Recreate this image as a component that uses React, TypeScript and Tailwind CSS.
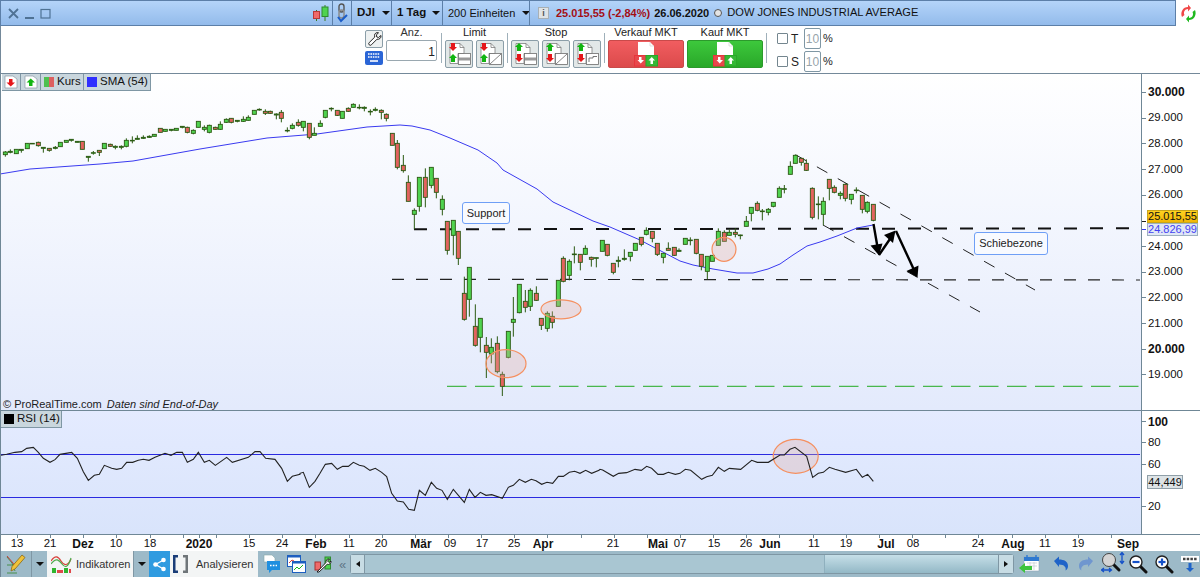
import React from "react"

const GREEN = "#4fd34f"
const RED = "#e2635e"
const WICK = "#2b5a12"

// [x, wickTop, bodyTop, bodyBottom, wickBottom, colour] read at 3x from the chart, per region
type C = [number, number, number, number, number, "G" | "R"]

const part1: C[] = [
  [16,183,186,194,200,"G"],[31,178,184,187,190,"G"],[49,178,178,191,192,"G"],[64,178,178,181,188,"G"],[82,160,160,176,176,"G"],[97,160,160,161,161,"G"],
  [115,155,157,167,170,"R"],[130,172,172,175,188,"G"],[148,175,175,181,185,"R"],[166,168,172,175,178,"G"],[181,157,157,170,170,"G"],[199,151,151,157,157,"G"],
  [214,148,148,151,155,"G"],[232,154,154,157,157,"G"],[247,154,154,178,178,"R"],[265,199,199,202,215,"G"],[280,183,188,189,194,"G"],[298,181,181,187,198,"R"],
  [313,160,160,176,176,"G"],[331,161,163,169,170,"R"],[346,166,169,172,178,"G"],[364,166,169,172,178,"G"],[379,145,151,169,172,"G"],[397,139,151,152,160,"G"],
  [412,136,145,148,148,"G"],[430,136,142,145,147,"G"],[448,136,139,142,144,"G"],[463,133,133,139,139,"G"],[481,115,115,127,127,"R"],[496,118,118,124,125,"G"],
  [514,118,118,121,124,"G"],[529,115,115,121,121,"G"],[547,109,109,112,115,"G"],[562,110,112,127,130,"R"],[580,118,121,130,133,"G"],[595,94,94,112,112,"G"],
  [613,106,112,118,124,"G"],[628,104,106,127,130,"G"],[646,110,112,118,119,"R"],[661,94,103,118,120,"G"],[679,85,88,97,99,"G"],[694,85,85,97,100,"R"],
  [712,91,91,94,97,"G"],[730,79,88,94,96,"G"],[745,76,82,91,92,"G"],[763,61,61,73,73,"G"],[778,55,58,60,62,"G"],[796,58,64,70,75,"R"],[811,62,64,70,72,"R"],
  [829,70,72,75,88,"G"],[844,60,67,85,97,"R"],[862,112,121,122,127,"G"],[877,100,106,115,118,"G"],[895,88,97,106,110,"R"],[910,94,94,112,124,"G"],
  [928,100,100,142,148,"R"],[943,112,130,136,136,"G"],[961,91,100,109,110,"G"],[976,61,61,82,85,"G"],[994,52,55,56,64,"G"],[1012,61,61,76,78,"R"],[1027,64,64,85,85,"G"],
  [1045,52,55,64,66,"R"],[1060,40,43,52,52,"G"],[1078,43,52,53,58,"G"],[1093,49,52,55,64,"G"],[1111,58,64,65,76,"G"],[1126,52,58,61,64,"G"],[1144,58,61,67,88,"R"],
  [1159,70,73,85,94,"R"],[1177,130,130,166,166,"R"],[1192,150,160,232,238,"R"],
]
const part2: C[] = [
  [70,15,46,62,68,"R"],[85,76,97,154,154,"R"],[103,175,181,193,238,"G"],[118,82,82,169,185,"G"],[136,55,82,142,172,"R"],[154,52,52,106,115,"G"],[169,85,85,127,145,"R"],
  [187,136,148,178,196,"G"],[202,214,214,301,314,"R"],[220,211,211,256,316,"G"],[235,244,244,325,345,"R"],[253,380,430,508,512,"R"],[268,352,352,448,500,"G"],
  [286,463,529,586,590,"R"],[301,505,505,562,607,"G"],[319,561,586,607,684,"R"],[334,565,592,612,640,"G"],[352,559,580,665,670,"R"],[367,665,673,709,738,"R"],
  [385,544,544,622,625,"G"],[400,441,508,517,560,"G"],[418,403,403,488,490,"G"],[436,420,454,472,487,"R"],[451,415,421,469,483,"G"],[469,409,430,451,453,"R"],
  [484,505,505,526,540,"R"],[502,484,490,535,545,"G"],[517,484,499,517,535,"R"],[535,391,391,469,469,"G"],[550,319,325,394,397,"R"],[568,328,334,376,391,"G"],
  [583,289,312,314,340,"G"],[601,313,313,337,361,"R"],[616,286,295,313,315,"G"],[634,320,322,328,350,"R"],[649,323,323,325,352,"G"],[667,271,271,304,304,"G"],
  [682,283,283,316,319,"R"],[700,340,340,367,373,"R"],[715,319,331,334,352,"G"],[733,298,325,328,332,"G"],[751,307,307,319,334,"G"],[766,280,280,301,301,"G"],
  [784,262,262,283,289,"R"],[799,232,241,253,256,"G"],[817,244,244,265,277,"R"],[832,280,280,313,318,"R"],[850,310,310,322,340,"G"],[865,277,295,301,301,"R"],[883,292,292,316,318,"R"],
]
const part3: C[] = [
  [-3,325,331,334,336,"G"],[16,295,295,313,313,"G"],[31,292,300,302,316,"G"],[49,298,298,340,343,"R"],[64,343,343,379,391,"R"],[82,349,349,394,418,"G"],[97,346,346,364,364,"G"],
  [115,265,274,316,316,"G"],[133,271,277,304,304,"R"],[148,268,277,286,286,"G"],[166,265,277,283,292,"R"],[181,284,285,287,298,"G"],[199,228,244,259,259,"G"],
  [214,202,202,220,244,"G"],[232,184,190,211,214,"R"],[247,207,213,215,241,"G"],[265,204,208,217,226,"G"],[280,187,187,199,202,"G"],[298,139,145,172,172,"G"],
  [313,135,146,148,160,"G"],[331,64,79,103,103,"G"],[346,43,46,70,70,"G"],[364,55,55,67,77,"R"],[379,58,70,91,93,"R"],[397,142,145,232,238,"R"],[415,169,192,194,238,"G"],
  [430,172,184,223,256,"G"],[448,118,118,145,181,"R"],[463,136,142,157,160,"R"],[481,154,160,166,178,"G"],[496,130,133,175,184,"R"],[514,163,163,178,193,"G"],
  [529,142,150,152,160,"G"],[547,166,166,208,220,"R"],[562,184,187,214,220,"G"],[580,193,193,241,244,"R"],
]

const toPage = (c: C, ox: number, oy: number) => ({
  x: ox + c[0] / 3, wt: oy + c[1] / 3, t: oy + c[2] / 3, b: oy + c[3] / 3, wb: oy + c[4] / 3, col: c[5],
})
const candles = [
  ...part1.map((c) => toPage(c, 0, 90)),
  ...part2.map((c) => toPage(c, 380, 150)),
  ...part3.map((c) => toPage(c, 680, 140)),
]

const sma = "0,174 30,169 100,164 133,161 200,149 267,138 317,134 367,127 400,125 412,126 430,130 450,138 478,150 497,163 503,170 537,189 553,202 593,221 610,227 640,240 680,261 693,265 713,269 737,273 753,273 768,269 780,264 793,255 807,246 820,242 837,236 857,228 873,225"

const rsiA = [[0,181],[20,178],[45,172],[65,170],[80,160],[100,157],[115,172],[130,190],[150,202],[165,194],[180,178],[215,172],[232,190],[250,230],[265,256],[283,241],[298,238],[313,211],[335,220],[350,223],[365,220],[380,202],[398,202],[415,196],[430,193],[447,196],[465,187],[495,175],[513,181],[530,172],[547,172],[562,202],[580,193],[595,172],[613,202],[628,196],[646,211],[680,187],[697,202],[745,187],[765,170],[780,170],[797,190],[825,193],[845,220],[862,259],[877,244],[900,238]]
const rsiB = [[0,190],[10,187],[28,232],[45,214],[60,190],[76,163],[95,160],[112,178],[128,169],[145,169],[160,157],[178,166],[192,169],[210,181],[226,175],[245,187],[260,200],[275,250],[292,273],[310,276],[326,298],[343,301],[358,241],[376,256],[394,217],[410,235],[426,241],[442,268],[460,238],[493,277],[508,238],[525,262],[541,247],[558,256],[575,254],[607,265],[625,232],[640,226],[658,208],[676,217],[694,208],[708,212],[725,223],[741,217],[758,220],[775,199],[790,199],[808,187],[824,184],[840,190],[857,181],[875,190],[897,181]]
const rsiC = [[0,178],[8,180],[40,199],[56,190],[80,188],[105,178],[124,181],[140,169],[155,175],[174,193],[190,193],[205,187],[226,193],[240,190],[256,178],[272,181],[305,208],[320,200],[337,196],[355,172],[373,184],[388,175],[422,178],[455,151],[472,157],[505,157],[540,135],[553,135],[570,118],[585,112],[620,139],[638,202],[655,190],[670,187],[688,172],[705,178],[737,187],[769,178],[787,202],[803,193],[820,214]]
const rsi = [
  ...rsiA.map(([x, y]) => `${x / 3},${y / 3 + 395}`),
  ...rsiB.map(([x, y]) => `${300 + x / 3},${y / 3 + 410}`),
  ...rsiC.map(([x, y]) => `${600 + x / 3},${y / 3 + 410}`),
].join(" ")

const priceRows = ["30.000", "29.000", "28.000", "27.000", "26.000", "", "24.000", "23.000", "22.000", "21.000", "20.000", "19.000"]
const xTicks = [...Array.from({ length: 34 }, (_, k) => 16 + 33.15 * k), 198]
const xLabels: [string, number, boolean][] = [
  ["13",16,false],["21",49,false],["Dez",82,true],["10",115,false],["18",149,false],["2020",198,true],["15",248,false],["24",281,false],["Feb",315,true],["11",348,false],["20",380,false],
  ["Mär",420,true],["09",449,false],["17",481,false],["25",513,false],["Apr",542,true],["21",612,false],["Mai",657,true],["07",679,false],["15",713,false],["26",745,false],["Jun",769,true],
  ["11",813,false],["19",845,false],["Jul",885,true],["08",912,false],["24",977,false],["Aug",1012,true],["11",1044,false],["19",1077,false],["Sep",1127,true],
]

function Caret() {
  return <span className="inline-block border-x-[4px] border-t-[4px] border-x-transparent border-t-[#111]" />
}

function Arrow({ x, y, up, color }: { x: number; y: number; up?: boolean; color: string }) {
  const d = up ? `M${x} ${y}l4 4h-2v4h-4v-4h-2z` : `M${x - 2} ${y}h4v4h2l-4 4l-4 -4h2z`
  return <path d={d} fill={color} />
}

// one of the five little order buttons: page corner, two arrows and a shape
function OrderButton({ first, shape }: { first: "up" | "down"; shape: "limit" | "stop" | "trail" }) {
  return (
    <div className="w-[28px] h-[28px] rounded-[2px] border border-[#8b9ea8] bg-[#e2e8e8] flex items-center justify-center">
      <svg width="26" height="26" viewBox="0 0 26 26">
        <path d="M4 2.500h10l4 4v6h-6v10H4z" fill="#fff" stroke="#6d6d6d" strokeWidth="0.7" />
        <path d="M14 2.500v4h4" fill="none" stroke="#6d6d6d" strokeWidth="0.7" />
        {first === "down" ? (
          <>
            <Arrow x={7} y={2} color="#e5161a" />
            <Arrow x={7} y={13} up color="#12b512" />
          </>
        ) : (
          <>
            <Arrow x={7} y={2} up color="#12b512" />
            <Arrow x={7} y={13} color="#e5161a" />
          </>
        )}
        <rect x="12.500" y="12.500" width="12" height="11" fill="#fff" stroke="#6d6d6d" strokeWidth="0.8" />
        {shape === "limit" && <rect x="13" y="16.500" width="11" height="3" fill="#9a9a9a" />}
        {shape === "stop" && <path d="M13 23l11 -10" stroke="#777" strokeWidth="0.9" />}
        {shape === "trail" && <path d="M15 21v-4h4v-1.500h4" stroke="#777" fill="none" strokeWidth="1" />}
      </svg>
    </div>
  )
}

function MarketIcon() {
  return (
    <svg width="24" height="26" viewBox="0 0 24 26">
      <path d="M4 1h12l4 4v10H4z" fill="#fff" />
      <path d="M16 1v4h4" fill="none" stroke="#ccc" strokeWidth="0.6" />
      <rect x="0.500" y="14.500" width="11.500" height="10.500" fill="#e8484c" stroke="#e8343c" />
      <rect x="12" y="14.500" width="11.500" height="10.500" fill="#35b835" stroke="#2aa82a" />
      <path d="M5 16h2.500v3H10l-3.250 3.500L3.500 19H5z" fill="#fff" />
      <path d="M17.750 16l3.250 3.500h-2V23h-2.500v-3.500h-2z" fill="#fff" />
    </svg>
  )
}

function Check({ label }: { label: string }) {
  return (
    <div className="flex items-center h-[21px]">
      <span className="w-[11px] h-[11px] rounded-[1px] border border-[#74868f] bg-white" />
      <span className="w-[16px] pl-[3px] text-[12px] text-[#222]">{label}</span>
      <span className="w-[17px] h-[21px] rounded-[2px] border border-[#7f97a4] text-[#98a4ab] text-[12px] flex items-center justify-center">10</span>
      <span className="ml-[2px] text-[11px] text-[#222]">%</span>
    </div>
  )
}

function Magnifier({ sign }: { sign?: "minus" | "plus" }) {
  return (
    <svg width="20" height="20" viewBox="0 0 20 20">
      <path d="M11.500 11.500L18 18" stroke="#111" strokeWidth="3" strokeLinecap="round" />
      <circle cx="8" cy="8" r="6" fill="#fff" stroke="#222" strokeWidth="1.400" />
      <path d="M4.500 8h7" stroke="#1450c8" strokeWidth="2.200" />
      {sign === "plus" && <path d="M8 4.500v7" stroke="#1450c8" strokeWidth="2.200" />}
    </svg>
  )
}

function App() {
  return (
    <div className="w-[1200px] h-[577px] overflow-hidden flex flex-col bg-white font-['Liberation_Sans',Arial,sans-serif] text-[#111]">
      {/* title bar */}
      <div className="h-[26px] flex shrink-0 bg-white">
        <div className="w-[1176px] flex items-center border border-[#5c7fa8] bg-gradient-to-b from-[#b4d4f9] to-[#93bbeb] text-[11.500px] leading-none">
          <div className="w-[331px] shrink-0 pl-[7px] pr-[2px] flex items-center gap-[5px] h-full">
            <svg className="shrink-0" width="11" height="11" viewBox="0 0 11 11"><path d="M1 1l9 9M10 1l-9 9" stroke="#4f7294" strokeWidth="1.800" /></svg>
            <svg className="shrink-0" width="11" height="11" viewBox="0 0 11 11"><path d="M1 10h9" stroke="#4f7294" strokeWidth="2" /></svg>
            <svg className="shrink-0" width="11" height="11" viewBox="0 0 11 11"><rect x="1" y="1.500" width="9" height="8.500" fill="none" stroke="#4f7294" strokeWidth="1.200" /></svg>
            <svg className="ml-auto shrink-0" width="18" height="18" viewBox="0 0 18 18">
              <path d="M4.500 6v11M13 1v16" stroke="#3a7a20" strokeWidth="1" />
              <rect x="1.500" y="7.500" width="6" height="7" fill="#ef6a6a" stroke="#b8393a" />
              <rect x="10" y="3" width="6" height="9.500" fill="#4fd34f" stroke="#2f8a2f" />
            </svg>
          </div>
          <div className="w-[19px] shrink-0 h-full flex items-center justify-center border-l border-[#5c7fa8]">
            <svg width="12" height="20" viewBox="0 0 12 20">
              <rect x="3" y="1" width="5" height="8" rx="2.500" fill="none" stroke="#555" strokeWidth="1.400" />
              <rect x="3" y="7" width="5" height="8" rx="2.500" fill="none" stroke="#888" strokeWidth="1.400" />
              <path d="M2 14l3 4l6 -6" fill="none" stroke="#1a5cc8" strokeWidth="2" />
            </svg>
          </div>
          <div className="w-[40px] shrink-0 h-full pl-[5px] flex items-center gap-[7px] font-bold border-l border-[#5c7fa8] whitespace-nowrap">DJI <Caret /></div>
          <div className="w-[51px] shrink-0 h-full pl-[5px] flex items-center gap-[6px] font-bold border-l border-[#5c7fa8] whitespace-nowrap">1 Tag <Caret /></div>
          <div className="w-[87px] shrink-0 h-full pl-[5px] flex items-center gap-[7px] text-[11px] border-l border-[#5c7fa8] whitespace-nowrap">200 Einheiten <Caret /></div>
          <div className="flex-1 h-full pl-[8px] flex items-center border-l border-[#5c7fa8] text-[11px] whitespace-nowrap">
            <span className="w-[11px] h-[12px] mr-[7px] bg-[#dfe3e6] border border-[#a8b0b5] text-[9px] font-bold text-[#555] flex items-center justify-center">i</span>
            <span className="font-bold text-[#a30f14]">25.015,55 (-2,84%)</span>
            <span className="font-bold ml-[4px]">26.06.2020</span>
            <span className="w-[8px] h-[8px] rounded-full border border-[#555] bg-[#e4e4e4] ml-[5px] mr-[5px]" />
            <span className="text-[11.100px]">DOW JONES INDUSTRIAL AVERAGE</span>
          </div>
        </div>
        <div className="flex-1 flex items-center justify-center">
          <svg width="19" height="19" viewBox="0 0 19 19">
            <path d="M3 13C1 8 4 3 9 3l0-2.500 3 3.500 -3 3.500V5C6 5 4 8 5.500 11z" fill="#f04848" />
            <path d="M16 6c2 5 -1 10 -6 10l0 2.500 -3 -3.500 3 -3.500V14c3 0 5 -3 3.500 -6z" fill="#1fb91f" />
          </svg>
        </div>
      </div>

      {/* order toolbar */}
      <div className="h-[48px] shrink-0 border-b border-l border-[#74899a] flex text-[11px] text-[#222] leading-none">
        <div className="w-[364px]" />
        <div className="w-[18px] pt-[4px] flex flex-col items-center gap-[3px]">
          <div className="w-[18px] h-[18px] rounded-[2px] border border-[#8b9ea8] bg-[#eef1f1] flex items-center justify-center">
            <svg width="15" height="15" viewBox="0 0 15 15"><path d="M14 3.500l-2.500 2-1.800-.6-.4-2L11.500.8C9.500.1 7.500 1.400 7.500 3.500c0 .6.1 1 .3 1.500l-5.600 5.600a1.500 1.500 0 0 0 2.200 2.200L10 7.200c2.200.6 4.500-1.300 4-3.700z" fill="#fff" stroke="#222" strokeWidth="1" /></svg>
          </div>
          <div className="w-[18px] h-[14px] rounded-[2px] bg-[#2a65d6] flex items-center justify-center">
            <svg width="14" height="10" viewBox="0 0 14 10"><path d="M1 1h12M1 4h12" stroke="#fff" strokeWidth="1.600" strokeDasharray="1.600 .8" /><path d="M3 8h8" stroke="#fff" strokeWidth="1.600" /></svg>
          </div>
        </div>
        <div className="w-[51px] ml-[3px] pt-[1px] flex flex-col items-center">
          <span className="h-[11px] text-[#333]">Anz.</span>
          <div className="mt-[2px] w-full h-[21px] rounded-[2px] border border-[#9aa8b0] text-right pr-[1px] pt-[5px] text-[12px]">1</div>
        </div>
        <div className="w-[1px] h-[30px] mt-[7px] ml-[4px] bg-[#9fb0ba]" />
        <div className="w-[65px] pt-[1px] flex flex-col items-center">
          <span className="h-[13px]">Limit</span>
          <div className="flex gap-[3px]">
            <OrderButton first="down" shape="limit" />
            <OrderButton first="down" shape="stop" />
          </div>
        </div>
        <div className="w-[1px] h-[30px] mt-[7px] bg-[#9fb0ba]" />
        <div className="w-[96px] pt-[1px] flex flex-col items-center">
          <span className="h-[13px]">Stop</span>
          <div className="flex gap-[3px]">
            <OrderButton first="up" shape="limit" />
            <OrderButton first="up" shape="stop" />
            <OrderButton first="up" shape="trail" />
          </div>
        </div>
        <div className="w-[1px] h-[30px] mt-[7px] bg-[#9fb0ba]" />
        <div className="w-[161px] pt-[1px] pl-[3px] flex flex-col">
          <div className="h-[13px] flex gap-[3px] text-center">
            <span className="w-[76px]">Verkauf MKT</span>
            <span className="w-[76px]">Kauf MKT</span>
          </div>
          <div className="flex gap-[3px]">
            <div className="w-[76px] h-[28px] rounded-[2px] border border-[#c94a4a] bg-gradient-to-b from-[#f15d60] to-[#dc4a4b] flex items-center justify-center"><MarketIcon /></div>
            <div className="w-[76px] h-[28px] rounded-[2px] border border-[#2c9a2c] bg-gradient-to-b from-[#3dc83c] to-[#29a829] flex items-center justify-center"><MarketIcon /></div>
          </div>
        </div>
        <div className="w-[1px] h-[30px] mt-[7px] bg-[#9fb0ba]" />
        <div className="pl-[10px] pt-[2px] flex flex-col gap-[2px]">
          <Check label="T" />
          <Check label="S" />
        </div>
      </div>

      {/* price pane */}
      <div className="h-[336px] shrink-0 flex">
        <div className="relative w-[1142px] border-l border-r border-[#6f8796] bg-gradient-to-b from-white to-[#e3eafc]">
          <svg className="block" width="1140" height="336" viewBox="1 74 1140 336">
            <path d="M414 229.300L1140 228.300" stroke="#111" strokeWidth="2" strokeDasharray="13 13" />
            <path d="M392 279.300L1140 280" stroke="#222" strokeWidth="1.200" strokeDasharray="12 12" />
            <path d="M447 386.300H1140" stroke="#22aa22" strokeWidth="1" strokeDasharray="19.500 8.500" />
            <path d="M796 155L1035 290" stroke="#222" strokeWidth="1" strokeDasharray="12 12" />
            <path d="M823 225L980 312" stroke="#222" strokeWidth="1" strokeDasharray="12 12" />
            <polyline points={sma} fill="none" stroke="#3a3af0" strokeWidth="1" />
            {candles.map((c, i) => (
              <g key={i}>
                <path d={`M${c.x} ${c.wt}V${c.wb}`} stroke={WICK} strokeWidth="1" />
                <rect x={c.x - 2} y={c.t} width="4" height={Math.max(c.b - c.t, 0.6)} fill={c.col === "G" ? GREEN : RED} stroke={WICK} strokeWidth="0.9" />
              </g>
            ))}
            <ellipse cx="506" cy="363.700" rx="20" ry="14" fill="#e0a8a0" fillOpacity="0.3" stroke="#f59060" strokeWidth="1.200" />
            <ellipse cx="561" cy="309.300" rx="20" ry="9.500" fill="#e0a8a0" fillOpacity="0.3" stroke="#f59060" strokeWidth="1.200" />
            <circle cx="724" cy="249.300" r="12" fill="#e0a8a0" fillOpacity="0.3" stroke="#f59060" strokeWidth="1.200" />
            <path d="M873.500 224L878 250M879 255L892 236M896 231L915 272" stroke="#000" strokeWidth="2.400" fill="none" />
            <path d="M879 255.500L870.500 245.500L882.500 243.500z" fill="#000" />
            <path d="M895.500 230.500L884 235L893 243z" fill="#000" />
            <path d="M917.500 277.500L906.500 271L918.500 265.500z" fill="#000" />
          </svg>
          {/* legend buttons sit over the chart */}
          <div className="absolute left-[1px] top-0 h-[17px] flex border-b border-r border-[#7f97a4] bg-[#c9d6dd] text-[11.500px] leading-none">
            <div className="w-[19px] flex items-center justify-center border-r border-[#7f97a4]">
              <svg width="14" height="14" viewBox="0 0 14 14"><path d="M1 1h8l4 3v9H1z" fill="#fff" stroke="#8a9aa4" strokeWidth="0.7" /><path d="M5 4h3.500v3.500H11l-4.250 4-4.250-4H5z" fill="#e5161a" /></svg>
            </div>
            <div className="w-[20px] flex items-center justify-center border-r border-[#7f97a4]">
              <svg width="14" height="14" viewBox="0 0 14 14"><path d="M1 1h8l4 3v9H1z" fill="#fff" stroke="#8a9aa4" strokeWidth="0.7" /><path d="M6.750 3.500L11 7.500H8.500V11H5V7.500H2.500z" fill="#12b512" /></svg>
            </div>
            <div className="w-[43px] flex items-center pl-[3px] gap-[3px] border-r border-[#7f97a4]">
              <span className="flex w-[10px] h-[10px]"><span className="w-[5px] bg-[#4fc04f]" /><span className="w-[5px] bg-[#dd6060]" /></span>Kurs
            </div>
            <div className="w-[66px] flex items-center pl-[3px] gap-[3px]">
              <span className="w-[10px] h-[10px] bg-[#2f2fff]" />SMA (54)
            </div>
          </div>
          <div className="absolute left-[461px] top-[128px] w-[48px] h-[22px] rounded-[3px] border border-[#6f9ff6] bg-[#f8faff] text-[11px] text-[#222] flex items-center justify-center">Support</div>
          <div className="absolute left-[973px] top-[158px] w-[74px] h-[23px] rounded-[3px] border border-[#6f9ff6] bg-[#f8faff] text-[11px] text-[#222] flex items-center justify-center">Schiebezone</div>
          <div className="absolute left-[2px] bottom-[-1px] text-[11px] leading-[13px] text-[#1c1c1c]">
            © ProRealTime.com <span className="italic ml-[2px]">Daten sind End-of-Day</span>
          </div>
        </div>
        <div className="relative flex-1 pt-[5.500px]">
          {priceRows.map((p) => (
            <div key={p || "blank"} className="h-[25.700px] flex items-center">
              {p && <span className="w-[4px] h-[1px] bg-[#6f8796]" />}
              <span className={`pl-[2px] leading-none ${p === "30.000" || p === "20.000" ? "font-bold text-[12px]" : "text-[11.400px]"}`}>{p}</span>
            </div>
          ))}
          <div className="absolute left-0 top-[147px] w-[4px] h-[1px] bg-[#222]" />
          <div className="absolute left-0 top-[155px] w-[4px] h-[1px] bg-[#3a3af0]" />
          <div className="absolute left-[5px] top-[136px] w-[51px] h-[13px] bg-gradient-to-b from-[#ffd21f] to-[#f2b705] border border-[#c8a51a] text-[11px] leading-[11px] text-center">25.015,55</div>
          <div className="absolute left-[5px] top-[149px] w-[51px] h-[13px] bg-[#e0e7f6] border border-[#9db0c0] text-[11px] leading-[11px] text-center text-[#4242f2]">24.826,99</div>
        </div>
      </div>

      {/* RSI pane */}
      <div className="h-[124px] shrink-0 flex">
        <div className="relative w-[1142px] border-t border-l border-r border-[#6f8796] bg-gradient-to-b from-[#e4ebff] to-[#d9e4fb]">
          <svg className="block" width="1140" height="123" viewBox="1 411 1140 123">
            <path d="M1 454.500H1140M1 497.500H1140" stroke="#2a2ae0" strokeWidth="1" />
            <ellipse cx="795.700" cy="456.300" rx="22.500" ry="17" fill="#e0a8a0" fillOpacity="0.3" stroke="#f59060" strokeWidth="1.200" />
            <polyline points={rsi} fill="none" stroke="#222" strokeWidth="1.100" />
          </svg>
          <div className="absolute left-0 top-0 w-[61px] h-[17px] flex items-center gap-[3px] pl-[3px] border-b border-r border-[#7f97a4] bg-[#c9d6dd] text-[11.500px] leading-none">
            <span className="w-[10px] h-[10px] bg-black" />RSI (14)
          </div>
        </div>
        <div className="relative flex-1 border-t border-[#6f8796]">
          {["100", "80", "60", "", "20"].map((p) => (
            <div key={p || "blank"} className="h-[21.300px] flex items-center">
              {p && <span className="w-[4px] h-[1px] bg-[#6f8796]" />}
              <span className={`pl-[2px] leading-none ${p === "100" ? "font-bold text-[12px]" : "text-[11.400px]"}`}>{p}</span>
            </div>
          ))}
          <div className="absolute left-[5px] top-[64px] w-[36px] h-[14px] bg-[#dde3e6] border border-[#8f9fa8] text-[11px] leading-[12px] text-center">44,449</div>
        </div>
      </div>

      {/* time axis */}
      <div className="relative h-[17px] shrink-0 border-t border-[#6f8796] border-l leading-none">
        {xTicks.map((x) => (
          <span key={x} className="absolute top-0 w-[1px] h-[3px] bg-[#6f8796]" style={{ left: x }} />
        ))}
        {xLabels.map(([t, x, bold]) => (
          <span key={t + x} className={`absolute top-[3px] -translate-x-1/2 ${bold ? "font-bold text-[12px]" : "text-[11.400px]"}`} style={{ left: x }}>{t}</span>
        ))}
      </div>

      {/* bottom toolbar */}
      <div className="h-[26px] shrink-0 flex items-center bg-[#9dbac8] border-l border-[#6f8796] text-[11px] leading-none">
        <div className="w-[31px] h-full flex items-center justify-center border-r border-[#7f97a4]">
          <svg width="22" height="22" viewBox="0 0 22 22">
            <path d="M2 4l5 6l3 8M2 12l8 0M2 20h10" stroke="#3f8a3f" strokeWidth="0.900" fill="none" />
            <path d="M2 3l6 7 2 4" stroke="#c83a3a" strokeWidth="1" fill="none" />
            <path d="M17 2l3 2.500L10 16l-4 2 1-4.500z" fill="#f0c23a" stroke="#8a6a14" strokeWidth="0.800" />
          </svg>
        </div>
        <div className="w-[15px] flex justify-center"><Caret /></div>
        <div className="w-[87px] h-full flex items-center bg-[#f3f5f5] border-r border-[#7f97a4]">
          <svg className="ml-[4px]" width="21" height="20" viewBox="0 0 21 20">
            <path d="M0 7C4 1 7 2 10 7s7 5 10 -2" stroke="#d8403a" strokeWidth="1.200" fill="none" />
            <path d="M0 10C5 3 8 6 11 10s6 4 9 -6" stroke="#4dab4d" strokeWidth="1.200" fill="none" />
            <path d="M1 14h4v5H1zM13 14h4v5h-4z" fill="#2fb52f" />
            <path d="M6 16h6v3H6zM18 15h2v4h-2z" fill="#e0484a" />
          </svg>
          <span className="ml-[4px] text-[#333]">Indikatoren</span>
        </div>
        <div className="w-[15px] flex justify-center"><Caret /></div>
        <div className="w-[21px] h-full flex items-center justify-center bg-[#2f9be0]">
          <svg width="15" height="15" viewBox="0 0 15 15"><path d="M11.500 3L3.500 7.500l8 4.500" stroke="#fff" fill="none" strokeWidth="1.300" /><circle cx="11.500" cy="3" r="2.300" fill="#fff" /><circle cx="3.500" cy="7.500" r="2.300" fill="#fff" /><circle cx="11.500" cy="12" r="2.300" fill="#fff" /></svg>
        </div>
        <div className="w-[88px] h-full flex items-center bg-[#f3f5f5]">
          <svg className="ml-[2px]" width="17" height="20" viewBox="0 0 17 20"><path d="M1 1h5v2.500H3.500v13H6V19H1z" fill="#1a3d78" /><path d="M16 1h-5v2.500h2.500v13H11V19h5z" fill="#6f7579" /></svg>
          <span className="ml-[7px] text-[#333] whitespace-nowrap">Analysieren</span>
        </div>
        <div className="ml-[5px] flex items-center gap-[6px]">
          <svg width="18" height="20" viewBox="0 0 18 20">
            <path d="M1 1h8l3 3v4H1z" fill="#fff" stroke="#8aa" strokeWidth="0.600" />
            <path d="M4 7h13v9H9l-3 3v-3H4z" fill="#1f8fe0" />
            <path d="M7 11.500h7" stroke="#fff" strokeWidth="1.500" strokeDasharray="1.600 1.200" />
          </svg>
          <svg width="19" height="20" viewBox="0 0 19 20">
            <rect x="0.500" y="1.500" width="13" height="11" fill="#fff" stroke="#1d5fc0" />
            <rect x="5.500" y="7.500" width="13" height="11" fill="#fff" stroke="#1d5fc0" />
            <path d="M0.500 1.500h13v2h-13zM5.500 7.500h13v2h-13z" fill="#1d5fc0" />
            <path d="M7 16l3 -3 2 2 4 -4" stroke="#1fb91f" strokeWidth="1" fill="none" />
            <path d="M2 9l3 -3 2 1" stroke="#d8403a" strokeWidth="1" fill="none" />
          </svg>
          <svg className="ml-[2px]" width="18" height="20" viewBox="0 0 18 20">
            <rect x="1" y="8" width="5.500" height="8" fill="#ef6a6a" stroke="#a83030" />
            <rect x="11" y="3" width="5.500" height="12" fill="#4fd34f" stroke="#2f8a2f" />
            <path d="M3 18L12 8.500c-.5-2 1-4 3.500-3.500l-2 2 1.500 1.500 2-1.500c.3 2.500-1.800 4-3.800 3.300L5 18z" fill="#fff" stroke="#111" strokeWidth="0.900" />
          </svg>
        </div>
        <span className="ml-[7px] w-[10px] text-[13px] text-[#5e7685]">«</span>
        <div className="ml-[1px] w-[664px] h-[20px] flex rounded-[3px] border border-[#7f97a4] bg-[#a9c6d2]">
          <div className="w-[14px] h-full flex items-center justify-center border-r border-[#7f97a4] bg-[#c7dce4]">
            <span className="border-y-[3.500px] border-r-[4px] border-y-transparent border-r-[#111]" />
          </div>
          <div className="w-[459px]" />
          <div className="flex-1 border-l border-[#8fb0be] bg-gradient-to-b from-[#c6dfe8] to-[#93b8c6]" />
          <div className="w-[15px] h-full flex items-center justify-center border-l border-[#7f97a4] bg-[#c7dce4]">
            <span className="border-y-[3.500px] border-l-[4px] border-y-transparent border-l-[#111]" />
          </div>
        </div>
        <div className="ml-[5px] flex items-center">
          <svg width="21" height="21" viewBox="0 0 21 21">
            <rect x="5" y="3" width="15" height="14" fill="#fff" stroke="#8fa8b8" strokeWidth="0.600" />
            <rect x="5" y="3" width="15" height="4" fill="#2f79d0" />
            <path d="M8 1v4M17 1v4" stroke="#2f79d0" strokeWidth="1.400" />
            <path d="M8 9h10M8 12h10M11 8v8M15 8v8" stroke="#c3ccd3" strokeWidth="0.700" />
            <path d="M0 14l6 -5v3h7v4H6v3z" fill="#3cc43c" />
          </svg>
          <svg className="ml-[13px]" width="16" height="16" viewBox="0 0 16 16"><path d="M1 5l5-4.500v3c5 0 9 2 9 6.500 0 2-1 3.500-2.500 4.500 1-3-1-6-6.500-6v2.500z" fill="#1f63c8" /></svg>
          <svg className="ml-[9px]" width="16" height="16" viewBox="0 0 16 16"><path d="M15 5l-5-4.500v3C5 3.500 1 5.500 1 10c0 2 1 3.500 2.500 4.500-1-3 1-6 6.500-6V11z" fill="#6f96cf" /></svg>
          <svg className="ml-[7px]" width="26" height="24" viewBox="0 0 26 24">
            <path d="M12 12l6 6" stroke="#111" strokeWidth="3" strokeLinecap="round" />
            <circle cx="8" cy="8" r="6.500" fill="#d4d4d4" stroke="#444" strokeWidth="1" />
            <path d="M21 1v10M19 3l2-2.500L23 3M19 9l2 2.500L23 9" stroke="#1450c8" strokeWidth="1.300" fill="none" />
            <path d="M1 18h9M3 16l-2.500 2L3 20M8 16l2.500 2L8 20" stroke="#1450c8" strokeWidth="1.300" fill="none" />
          </svg>
          <div className="ml-[1px]"><Magnifier sign="minus" /></div>
          <div className="ml-[6px]"><Magnifier sign="plus" /></div>
          <svg className="ml-[6px]" width="20" height="18" viewBox="0 0 20 18">
            <rect x="1" y="1" width="18" height="6" fill="#fff" />
            <path d="M3 4h14" stroke="#444" strokeWidth="2.500" strokeDasharray="2.500 1.200" />
            <path d="M8.500 8h3v5H14l-4 4-4-4h2.500z" fill="#1f63c8" />
          </svg>
        </div>
      </div>
    </div>
  )
}

export default App
